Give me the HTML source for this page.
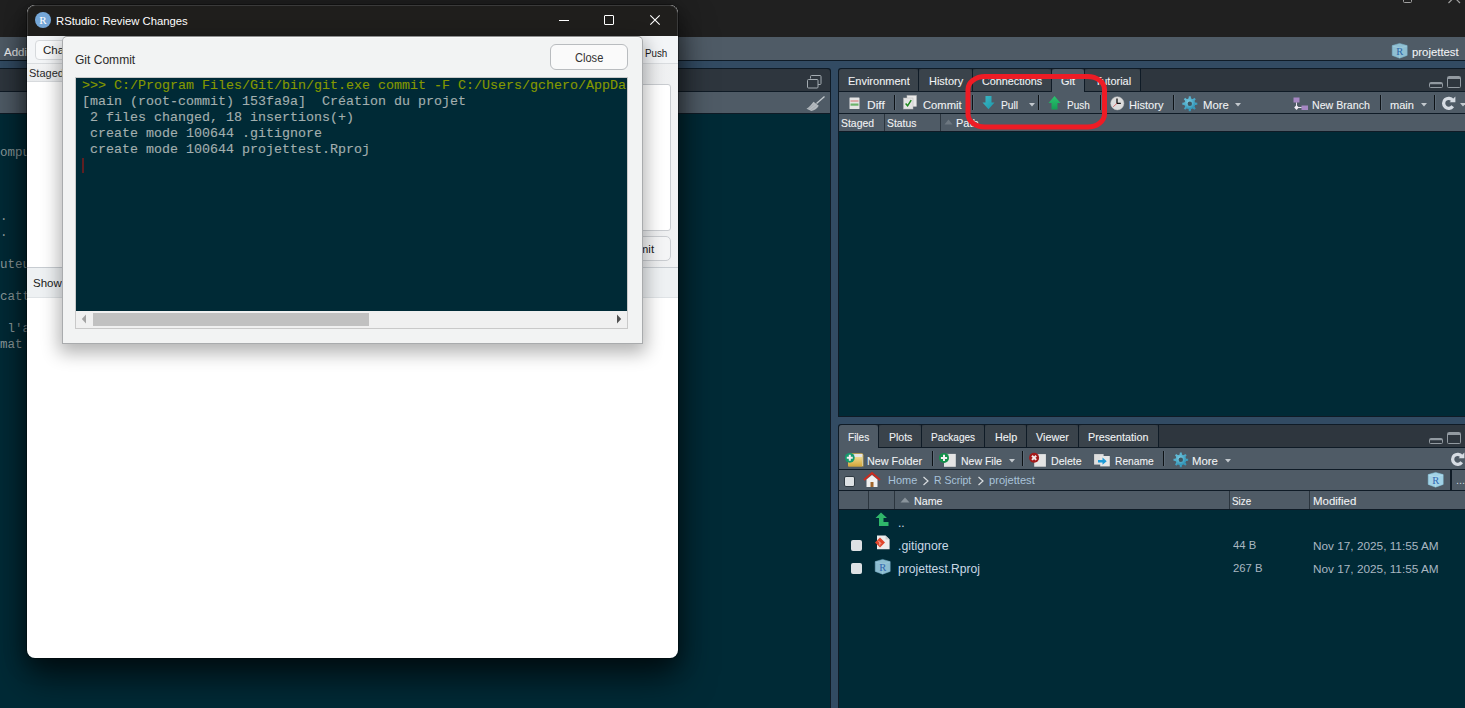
<!DOCTYPE html>
<html><head><meta charset="utf-8">
<style>
*{box-sizing:border-box;margin:0;padding:0}
html,body{width:1465px;height:708px;overflow:hidden;background:#324b63;font-family:"Liberation Sans",sans-serif;position:relative}
.a{position:absolute}
.t{position:absolute;white-space:pre;line-height:1}
svg{overflow:visible}
</style></head><body>
<div class="a" style="left:0px;top:0px;width:1465px;height:37px;background:#202020;"></div>
<svg class="a" style="left:1403px;top:-1px;" width="12" height="4" viewBox="0 0 12 4"><path d="M0.5 -5 L0.5 2.5 Q0.5 3.5 1.5 3.5 L7.5 3.5 Q8.5 3.5 8.5 2.5 L8.5 -5" fill="none" stroke="#a0a0a0" stroke-width="1"/><path d="M10 -4 L10 0" stroke="#a0a0a0" stroke-width="1"/></svg>
<svg class="a" style="left:1447px;top:0px;" width="14" height="4" viewBox="0 0 14 4"><path d="M1.5 3 L6 -1.5 M13 3 L8.5 -1.5" stroke="#a0a0a0" stroke-width="1.2"/></svg>
<div class="a" style="left:0px;top:37px;width:1465px;height:24px;background:#4f5b66;border-bottom:1px solid #0f1c28"></div>
<div class="t" style="left:4.00px;top:47.27px;font-size:11.5px;color:#eef0f2;font-family:'Liberation Sans';-webkit-text-stroke:0.2px rgba(255,255,255,0.55);">Addins</div>
<svg class="a" style="left:1392px;top:43px;" width="16" height="16" viewBox="0 0 16 16"><path d="M7.6 0.4 L15.2 2.6 L15.2 12.4 L7.6 15.2 L0.2 12.4 L0.2 2.6 Z" fill="#8fbfd2" stroke="#78b0c8" stroke-width="0.5"/><path d="M0.6 3 L7.6 5 L15 3 M7.6 5 L7.6 15" stroke="#a9d3e4" stroke-width="0.5" fill="none"/><text x="7.8" y="11.6" font-size="10.5" text-anchor="middle" fill="#2f66a8" font-family="Liberation Serif">R</text></svg>
<div class="t" style="left:1412.00px;top:47.43px;font-size:11.3px;color:#eef0f2;font-family:'Liberation Sans';transform:scaleX(1.0043);transform-origin:0 0;-webkit-text-stroke:0.2px rgba(255,255,255,0.55);">projettest</div>
<div class="a" style="left:0px;top:68px;width:831px;height:640px;background:#0f1b26;border-radius:0 3px 0 0"></div>
<div class="a" style="left:0px;top:69px;width:830px;height:22px;background:#2e363e;border-radius:0 3px 0 0"></div>
<div class="a" style="left:0px;top:92px;width:830px;height:21px;background:#4f5b66;"></div>
<div class="a" style="left:0px;top:114px;width:830px;height:594px;background:#002a36;"></div>
<svg class="a" style="left:806px;top:74px;" width="16" height="15" viewBox="0 0 16 15"><path d="M4.5 4.5 L4.5 2.5 Q4.5 1.5 5.5 1.5 L14 1.5 Q15 1.5 15 2.5 L15 9.5 Q15 10.5 14 10.5 L12 10.5" fill="none" stroke="#a3abb1" stroke-width="1"/><rect x="1.5" y="5.5" width="10.5" height="8.5" fill="none" stroke="#a3abb1" stroke-width="1" rx="1"/></svg>
<svg class="a" style="left:805px;top:95px;" width="22" height="18" viewBox="0 0 22 18"><path d="M19.5 1.5 L11.5 8.5" stroke="#c3c9ce" stroke-width="1.3"/><path d="M8.5 6.8 L13.8 10.8 C12 13.5 9.5 15.5 6.5 16 L1.5 13.8 C4 12.5 6.5 9.5 8.5 6.8 Z" fill="#b4babf"/><path d="M3 14.3 L9.5 9 M5.5 15.2 L11.5 10.5" stroke="#9aa1a7" stroke-width="0.6"/></svg>
<div class="t" style="left:0px;top:147.42px;font-size:12.5px;color:#8d9a9c;font-family:'Liberation Mono';">ompu</div>
<div class="t" style="left:0px;top:211.42px;font-size:12.5px;color:#8d9a9c;font-family:'Liberation Mono';">.</div>
<div class="t" style="left:0px;top:227.42px;font-size:12.5px;color:#8d9a9c;font-family:'Liberation Mono';">.</div>
<div class="t" style="left:0px;top:259.42px;font-size:12.5px;color:#8d9a9c;font-family:'Liberation Mono';">uteu</div>
<div class="t" style="left:0px;top:291.42px;font-size:12.5px;color:#8d9a9c;font-family:'Liberation Mono';">catt</div>
<div class="t" style="left:0px;top:323.42px;font-size:12.5px;color:#8d9a9c;font-family:'Liberation Mono';"> l'a</div>
<div class="t" style="left:0px;top:339.42px;font-size:12.5px;color:#8d9a9c;font-family:'Liberation Mono';">mat</div>
<div class="a" style="left:838px;top:68px;width:627px;height:349px;background:#0f1b26;border-radius:3px 0 0 0"></div>
<div class="a" style="left:839px;top:69px;width:626px;height:22px;background:#2e363e;border-radius:3px 0 0 0"></div>
<div class="a" style="left:839px;top:69px;width:79px;height:22px;background:#3a434b;border-radius:3px 3px 0 0"></div>
<div class="a" style="left:918px;top:69px;width:1px;height:22px;background:#0f1b26;"></div>
<div class="t" style="left:848.30px;top:75.69px;font-size:11px;color:#eef0f2;font-family:'Liberation Sans';transform:scaleX(0.9989);transform-origin:0 0;-webkit-text-stroke:0.2px rgba(255,255,255,0.55);">Environment</div>
<div class="a" style="left:919px;top:69px;width:53px;height:22px;background:#3a434b;border-radius:3px 3px 0 0"></div>
<div class="a" style="left:972px;top:69px;width:1px;height:22px;background:#0f1b26;"></div>
<div class="t" style="left:928.70px;top:75.69px;font-size:11px;color:#eef0f2;font-family:'Liberation Sans';transform:scaleX(0.9968);transform-origin:0 0;-webkit-text-stroke:0.2px rgba(255,255,255,0.55);">History</div>
<div class="a" style="left:973px;top:69px;width:78px;height:22px;background:#3a434b;border-radius:3px 3px 0 0"></div>
<div class="a" style="left:1051px;top:69px;width:1px;height:22px;background:#0f1b26;"></div>
<div class="t" style="left:982.20px;top:75.69px;font-size:11px;color:#eef0f2;font-family:'Liberation Sans';transform:scaleX(0.9827);transform-origin:0 0;-webkit-text-stroke:0.2px rgba(255,255,255,0.55);">Connections</div>
<div class="a" style="left:1052px;top:69px;width:32px;height:23px;background:#4f5b66;border-radius:3px 3px 0 0"></div>
<div class="a" style="left:1084px;top:69px;width:1px;height:22px;background:#0f1b26;"></div>
<div class="t" style="left:1061.00px;top:75.69px;font-size:11px;color:#eef0f2;font-family:'Liberation Sans';transform:scaleX(0.9943);transform-origin:0 0;-webkit-text-stroke:0.2px rgba(255,255,255,0.55);">Git</div>
<div class="a" style="left:1085px;top:69px;width:55px;height:22px;background:#3a434b;border-radius:3px 3px 0 0"></div>
<div class="a" style="left:1140px;top:69px;width:1px;height:22px;background:#0f1b26;"></div>
<div class="t" style="left:1094.60px;top:75.69px;font-size:11px;color:#eef0f2;font-family:'Liberation Sans';transform:scaleX(0.9945);transform-origin:0 0;-webkit-text-stroke:0.2px rgba(255,255,255,0.55);">Tutorial</div>
<svg class="a" style="left:1428px;top:75px;" width="36" height="15" viewBox="0 0 36 15"><rect x="1.5" y="7.5" width="13" height="5" fill="none" stroke="#929aa1" stroke-width="1" rx="1"/><line x1="2" y1="8.5" x2="14" y2="8.5" stroke="#929aa1" stroke-width="1.5"/><rect x="19.5" y="1.5" width="13" height="11" fill="none" stroke="#929aa1" stroke-width="1" rx="1"/><line x1="20" y1="3" x2="32" y2="3" stroke="#929aa1" stroke-width="2"/></svg>
<div class="a" style="left:839px;top:92px;width:626px;height:21px;background:#4f5b66;"></div>
<svg class="a" style="left:849px;top:97px;" width="11" height="12" viewBox="0 0 11 12"><rect x="0.5" y="0.5" width="10" height="11.5" fill="#e4e4e4" rx="0.5"/><rect x="1.5" y="3" width="8" height="2" fill="#dcaaaa"/><rect x="1.5" y="6.5" width="8" height="2.2" fill="#6cb36c"/></svg>
<div class="t" style="left:867.10px;top:100.22px;font-size:11.2px;color:#eef0f2;font-family:'Liberation Sans';transform:scaleX(1.0702);transform-origin:0 0;-webkit-text-stroke:0.2px rgba(255,255,255,0.55);">Diff</div>
<div class="a" style="left:894px;top:95px;width:1px;height:15px;background:#0d1216;box-shadow:1px 0 0 rgba(120,135,148,0.35)"></div>
<svg class="a" style="left:903px;top:95px;" width="15" height="15" viewBox="0 0 15 15"><rect x="4" y="0.5" width="9.5" height="11" fill="#e9e9e9" stroke="#b9b9b9" stroke-width="0.5"/><rect x="0.5" y="3" width="9.5" height="11" fill="#e4e4e4" stroke="#b9b9b9" stroke-width="0.5"/><path d="M2.6 8.5 L4.6 10.8 L8.2 5.2" fill="none" stroke="#1e8a1e" stroke-width="1.5"/></svg>
<div class="t" style="left:923.30px;top:100.22px;font-size:11.2px;color:#eef0f2;font-family:'Liberation Sans';transform:scaleX(1.0030);transform-origin:0 0;-webkit-text-stroke:0.2px rgba(255,255,255,0.55);">Commit</div>
<div class="a" style="left:972px;top:95px;width:1px;height:15px;background:#0d1216;box-shadow:1px 0 0 rgba(120,135,148,0.35)"></div>
<svg class="a" style="left:982px;top:96px;" width="13" height="14" viewBox="0 0 13 14"><defs><linearGradient id="gp" x1="0" y1="0" x2="1" y2="1"><stop offset="0" stop-color="#3bbac6"/><stop offset="1" stop-color="#1c97aa"/></linearGradient></defs><path d="M3.5 0 L9.5 0 L9.5 6.5 L12.5 6.5 L6.5 13.2 L0.5 6.5 L3.5 6.5 Z" fill="url(#gp)"/></svg>
<div class="t" style="left:1001.00px;top:100.22px;font-size:11.2px;color:#eef0f2;font-family:'Liberation Sans';transform:scaleX(0.9196);transform-origin:0 0;-webkit-text-stroke:0.2px rgba(255,255,255,0.55);">Pull</div>
<svg class="a" style="left:1028.5px;top:103px;" width="6" height="4" viewBox="0 0 6 4"><path d="M0 0 L6 0 L3 3.5 Z" fill="#c3c9ce"/></svg>
<div class="a" style="left:1038px;top:95px;width:1px;height:15px;background:#0d1216;box-shadow:1px 0 0 rgba(120,135,148,0.35)"></div>
<svg class="a" style="left:1048px;top:96px;" width="13" height="14" viewBox="0 0 13 14"><defs><linearGradient id="gu" x1="0" y1="0" x2="0" y2="1"><stop offset="0" stop-color="#2bc46f"/><stop offset="1" stop-color="#159c55"/></linearGradient></defs><path d="M6.5 0 L12.5 7 L9.5 7 L9.5 13.5 L3.5 13.5 L3.5 7 L0.5 7 Z" fill="url(#gu)"/></svg>
<div class="t" style="left:1067.00px;top:100.22px;font-size:11.2px;color:#eef0f2;font-family:'Liberation Sans';transform:scaleX(0.8929);transform-origin:0 0;-webkit-text-stroke:0.2px rgba(255,255,255,0.55);">Push</div>
<div class="a" style="left:1100px;top:95px;width:1px;height:15px;background:#0d1216;box-shadow:1px 0 0 rgba(120,135,148,0.35)"></div>
<svg class="a" style="left:1110px;top:96px;" width="15" height="15" viewBox="0 0 15 15"><circle cx="7.3" cy="7.3" r="6.6" fill="#dcdcdc" stroke="#c4c4c4" stroke-width="0.5"/><path d="M7 2.5 L7 7.3 L10.8 7.3" fill="none" stroke="#111" stroke-width="1.3"/><path d="M7 7.3 L3.2 10.8" stroke="#d86060" stroke-width="0.9"/></svg>
<div class="t" style="left:1129.20px;top:100.22px;font-size:11.2px;color:#eef0f2;font-family:'Liberation Sans';transform:scaleX(0.9905);transform-origin:0 0;-webkit-text-stroke:0.2px rgba(255,255,255,0.55);">History</div>
<div class="a" style="left:1173px;top:95px;width:1px;height:15px;background:#0d1216;box-shadow:1px 0 0 rgba(120,135,148,0.35)"></div>
<svg class="a" style="left:1182px;top:96px;" width="16" height="16" viewBox="0 0 16 16"><defs><radialGradient id="gg" cx="0.4" cy="0.35" r="0.7"><stop offset="0" stop-color="#7fd0e6"/><stop offset="1" stop-color="#2a8fb3"/></radialGradient></defs><path d="M13.07 6.62 L15.34 6.81 L15.34 8.79 L13.07 8.98 L12.36 10.69 L13.83 12.43 L12.43 13.83 L10.69 12.36 L8.98 13.07 L8.79 15.34 L6.81 15.34 L6.62 13.07 L4.91 12.36 L3.17 13.83 L1.77 12.43 L3.24 10.69 L2.53 8.98 L0.26 8.79 L0.26 6.81 L2.53 6.62 L3.24 4.91 L1.77 3.17 L3.17 1.77 L4.91 3.24 L6.62 2.53 L6.81 0.26 L8.79 0.26 L8.98 2.53 L10.69 3.24 L12.43 1.77 L13.83 3.17 L12.36 4.91 Z" fill="url(#gg)"/><circle cx="7.8" cy="7.8" r="5.3" fill="url(#gg)"/><circle cx="7.8" cy="7.8" r="2.2" fill="#3f5560"/></svg>
<div class="t" style="left:1202.60px;top:100.22px;font-size:11.2px;color:#eef0f2;font-family:'Liberation Sans';transform:scaleX(1.0103);transform-origin:0 0;-webkit-text-stroke:0.2px rgba(255,255,255,0.55);">More</div>
<svg class="a" style="left:1234.5px;top:103px;" width="6" height="4" viewBox="0 0 6 4"><path d="M0 0 L6 0 L3 3.5 Z" fill="#c3c9ce"/></svg>
<svg class="a" style="left:1293px;top:97px;" width="16" height="14" viewBox="0 0 16 14"><rect x="0.5" y="0.5" width="6" height="5" fill="#a586c2"/><rect x="8.5" y="8.5" width="6.5" height="4.5" fill="#a586c2"/><path d="M3.5 5.5 L3.5 10.5 L8.5 10.5" stroke="#e9e0f0" stroke-width="1" fill="none"/><path d="M3.5 8 L5.8 10.5 L3.5 13 L1.2 10.5 Z" fill="#f2eef5"/></svg>
<div class="t" style="left:1312.20px;top:100.39px;font-size:11px;color:#eef0f2;font-family:'Liberation Sans';transform:scaleX(0.9667);transform-origin:0 0;-webkit-text-stroke:0.2px rgba(255,255,255,0.55);">New Branch</div>
<div class="a" style="left:1380px;top:95px;width:1px;height:15px;background:#0d1216;box-shadow:1px 0 0 rgba(120,135,148,0.35)"></div>
<div class="t" style="left:1390.00px;top:100.22px;font-size:11.2px;color:#eef0f2;font-family:'Liberation Sans';transform:scaleX(0.9875);transform-origin:0 0;-webkit-text-stroke:0.2px rgba(255,255,255,0.55);">main</div>
<svg class="a" style="left:1420.5px;top:103px;" width="6" height="4" viewBox="0 0 6 4"><path d="M0 0 L6 0 L3 3.5 Z" fill="#c3c9ce"/></svg>
<div class="a" style="left:1434px;top:95px;width:1px;height:15px;background:#0d1216;box-shadow:1px 0 0 rgba(120,135,148,0.35)"></div>
<svg class="a" style="left:1441px;top:96px;" width="16" height="15" viewBox="0 0 16 15"><path d="M11.7 4.4 A5 5 0 1 0 11.7 10.2" fill="none" stroke="#d6dce3" stroke-width="3.3"/><path d="M8.6 6.2 L14.4 6.2 L14.4 0.6 Z" fill="#d6dce3"/></svg>
<svg class="a" style="left:1460px;top:103px;" width="6" height="4" viewBox="0 0 6 4"><path d="M0 0 L6 0 L3 3.5 Z" fill="#c3c9ce"/></svg>
<div class="a" style="left:839px;top:114px;width:626px;height:17px;background:#4f5b66;"></div>
<div class="a" style="left:884px;top:114px;width:1px;height:17px;background:#2b353e;"></div>
<div class="a" style="left:940px;top:114px;width:1px;height:17px;background:#2b353e;"></div>
<div class="t" style="left:841.00px;top:118.19px;font-size:11px;color:#eef0f2;font-family:'Liberation Sans';transform:scaleX(0.9464);transform-origin:0 0;-webkit-text-stroke:0.2px rgba(255,255,255,0.55);">Staged</div>
<div class="t" style="left:887.00px;top:118.19px;font-size:11px;color:#eef0f2;font-family:'Liberation Sans';transform:scaleX(0.9428);transform-origin:0 0;-webkit-text-stroke:0.2px rgba(255,255,255,0.55);">Status</div>
<svg class="a" style="left:944px;top:119px;" width="9" height="6" viewBox="0 0 9 6"><path d="M0.5 5.5 L4.5 0.5 L8.5 5.5 Z" fill="#6d7780"/></svg>
<div class="t" style="left:956.00px;top:118.19px;font-size:11px;color:#eef0f2;font-family:'Liberation Sans';-webkit-text-stroke:0.2px rgba(255,255,255,0.55);">Path</div>
<div class="a" style="left:839px;top:132px;width:626px;height:284px;background:#002a36;"></div>
<div class="a" style="left:838px;top:424px;width:627px;height:284px;background:#0f1b26;border-radius:3px 0 0 0"></div>
<div class="a" style="left:839px;top:425px;width:626px;height:22px;background:#2e363e;border-radius:3px 0 0 0"></div>
<div class="a" style="left:839px;top:425px;width:39px;height:23px;background:#4f5b66;border-radius:3px 3px 0 0"></div>
<div class="a" style="left:878px;top:425px;width:1px;height:22px;background:#0f1b26;"></div>
<div class="t" style="left:848.00px;top:431.69px;font-size:11px;color:#eef0f2;font-family:'Liberation Sans';transform:scaleX(0.9134);transform-origin:0 0;-webkit-text-stroke:0.2px rgba(255,255,255,0.55);">Files</div>
<div class="a" style="left:879px;top:425px;width:42px;height:22px;background:#3a434b;border-radius:3px 3px 0 0"></div>
<div class="a" style="left:921px;top:425px;width:1px;height:22px;background:#0f1b26;"></div>
<div class="t" style="left:888.50px;top:431.69px;font-size:11px;color:#eef0f2;font-family:'Liberation Sans';transform:scaleX(0.9561);transform-origin:0 0;-webkit-text-stroke:0.2px rgba(255,255,255,0.55);">Plots</div>
<div class="a" style="left:922px;top:425px;width:62px;height:22px;background:#3a434b;border-radius:3px 3px 0 0"></div>
<div class="a" style="left:984px;top:425px;width:1px;height:22px;background:#0f1b26;"></div>
<div class="t" style="left:931.10px;top:431.69px;font-size:11px;color:#eef0f2;font-family:'Liberation Sans';transform:scaleX(0.9132);transform-origin:0 0;-webkit-text-stroke:0.2px rgba(255,255,255,0.55);">Packages</div>
<div class="a" style="left:985px;top:425px;width:41px;height:22px;background:#3a434b;border-radius:3px 3px 0 0"></div>
<div class="a" style="left:1026px;top:425px;width:1px;height:22px;background:#0f1b26;"></div>
<div class="t" style="left:994.70px;top:431.69px;font-size:11px;color:#eef0f2;font-family:'Liberation Sans';transform:scaleX(0.9821);transform-origin:0 0;-webkit-text-stroke:0.2px rgba(255,255,255,0.55);">Help</div>
<div class="a" style="left:1027px;top:425px;width:51px;height:22px;background:#3a434b;border-radius:3px 3px 0 0"></div>
<div class="a" style="left:1078px;top:425px;width:1px;height:22px;background:#0f1b26;"></div>
<div class="t" style="left:1035.90px;top:431.69px;font-size:11px;color:#eef0f2;font-family:'Liberation Sans';transform:scaleX(0.9809);transform-origin:0 0;-webkit-text-stroke:0.2px rgba(255,255,255,0.55);">Viewer</div>
<div class="a" style="left:1079px;top:425px;width:79px;height:22px;background:#3a434b;border-radius:3px 3px 0 0"></div>
<div class="a" style="left:1158px;top:425px;width:1px;height:22px;background:#0f1b26;"></div>
<div class="t" style="left:1087.90px;top:431.69px;font-size:11px;color:#eef0f2;font-family:'Liberation Sans';transform:scaleX(0.9779);transform-origin:0 0;-webkit-text-stroke:0.2px rgba(255,255,255,0.55);">Presentation</div>
<svg class="a" style="left:1428px;top:431px;" width="36" height="15" viewBox="0 0 36 15"><rect x="1.5" y="7.5" width="13" height="5" fill="none" stroke="#929aa1" stroke-width="1" rx="1"/><line x1="2" y1="8.5" x2="14" y2="8.5" stroke="#929aa1" stroke-width="1.5"/><rect x="19.5" y="1.5" width="13" height="11" fill="none" stroke="#929aa1" stroke-width="1" rx="1"/><line x1="20" y1="3" x2="32" y2="3" stroke="#929aa1" stroke-width="2"/></svg>
<div class="a" style="left:839px;top:448px;width:626px;height:21px;background:#4f5b66;"></div>
<svg class="a" style="left:840px;top:448px;" width="26" height="20" viewBox="0 0 26 20"><defs><linearGradient id="fg" x1="0" y1="0" x2="0" y2="1"><stop offset="0" stop-color="#efd98a"/><stop offset="1" stop-color="#d2a53a"/></linearGradient></defs><path d="M8.5 7 Q8.5 5.3 10.5 5.3 L21.5 5.3 Q23.4 5.3 23.4 7.3 L23.4 18.4 L8.5 18.4 Z" fill="#cfae4a"/><rect x="11" y="6" width="11.5" height="12" fill="#e4e4e4"/><rect x="8" y="9" width="14" height="9.4" fill="url(#fg)"/><circle cx="9.8" cy="9.8" r="4.9" fill="#159a6c"/><path d="M9.8 6.8 V12.8 M6.8 9.8 H12.8" stroke="#f4ecef" stroke-width="2"/></svg>
<div class="t" style="left:867.30px;top:455.52px;font-size:11.2px;color:#eef0f2;font-family:'Liberation Sans';transform:scaleX(0.9653);transform-origin:0 0;-webkit-text-stroke:0.2px rgba(255,255,255,0.55);">New Folder</div>
<div class="a" style="left:932px;top:451px;width:1px;height:15px;background:#0d1216;box-shadow:1px 0 0 rgba(120,135,148,0.35)"></div>
<svg class="a" style="left:935px;top:448px;" width="24" height="20" viewBox="0 0 24 20"><rect x="9" y="5.9" width="11.8" height="12.9" fill="#e4e4e4"/><circle cx="9" cy="9.9" r="5" fill="#14904a"/><path d="M9 6.8 V13 M5.9 9.9 H12.1" stroke="#f6eef2" stroke-width="2"/></svg>
<div class="t" style="left:960.90px;top:455.52px;font-size:11.2px;color:#eef0f2;font-family:'Liberation Sans';transform:scaleX(0.9388);transform-origin:0 0;-webkit-text-stroke:0.2px rgba(255,255,255,0.55);">New File</div>
<svg class="a" style="left:1008.5px;top:459px;" width="6" height="4" viewBox="0 0 6 4"><path d="M0 0 L6 0 L3 3.5 Z" fill="#c3c9ce"/></svg>
<div class="a" style="left:1022px;top:451px;width:1px;height:15px;background:#0d1216;box-shadow:1px 0 0 rgba(120,135,148,0.35)"></div>
<svg class="a" style="left:1025px;top:448px;" width="24" height="20" viewBox="0 0 24 20"><rect x="9.2" y="6.1" width="11.7" height="12.6" fill="#e4e4e4"/><circle cx="9.1" cy="9.8" r="5" fill="#a3191a"/><path d="M7 7.7 L11.2 11.9 M11.2 7.7 L7 11.9" stroke="#f2eaea" stroke-width="2"/></svg>
<div class="t" style="left:1051.30px;top:455.52px;font-size:11.2px;color:#eef0f2;font-family:'Liberation Sans';transform:scaleX(0.9485);transform-origin:0 0;-webkit-text-stroke:0.2px rgba(255,255,255,0.55);">Delete</div>
<svg class="a" style="left:1090px;top:448px;" width="24" height="20" viewBox="0 0 24 20"><rect x="4.1" y="6.1" width="9.5" height="10.5" fill="#dedede"/><rect x="10.2" y="8" width="9.6" height="10.4" fill="#e6e6e6"/><path d="M8 12 L12.5 12 L12.5 9.6 L16.7 13.2 L12.5 16.8 L12.5 14.4 L8 14.4 Z" fill="#1e9ad6"/></svg>
<div class="t" style="left:1114.50px;top:455.52px;font-size:11.2px;color:#eef0f2;font-family:'Liberation Sans';transform:scaleX(0.9141);transform-origin:0 0;-webkit-text-stroke:0.2px rgba(255,255,255,0.55);">Rename</div>
<div class="a" style="left:1163px;top:451px;width:1px;height:15px;background:#0d1216;box-shadow:1px 0 0 rgba(120,135,148,0.35)"></div>
<svg class="a" style="left:1173px;top:452px;" width="16" height="16" viewBox="0 0 16 16"><defs><radialGradient id="gg2" cx="0.4" cy="0.35" r="0.7"><stop offset="0" stop-color="#7fd0e6"/><stop offset="1" stop-color="#2a8fb3"/></radialGradient></defs><path d="M12.97 6.64 L15.14 6.84 L15.14 8.76 L12.97 8.96 L12.28 10.64 L13.67 12.31 L12.31 13.67 L10.64 12.28 L8.96 12.97 L8.76 15.14 L6.84 15.14 L6.64 12.97 L4.96 12.28 L3.29 13.67 L1.93 12.31 L3.32 10.64 L2.63 8.96 L0.46 8.76 L0.46 6.84 L2.63 6.64 L3.32 4.96 L1.93 3.29 L3.29 1.93 L4.96 3.32 L6.64 2.63 L6.84 0.46 L8.76 0.46 L8.96 2.63 L10.64 3.32 L12.31 1.93 L13.67 3.29 L12.28 4.96 Z" fill="url(#gg2)"/><circle cx="7.8" cy="7.8" r="5.2" fill="url(#gg2)"/><circle cx="7.8" cy="7.8" r="2.2" fill="#3f5560"/></svg>
<div class="t" style="left:1192.30px;top:455.52px;font-size:11.2px;color:#eef0f2;font-family:'Liberation Sans';transform:scaleX(1.0182);transform-origin:0 0;-webkit-text-stroke:0.2px rgba(255,255,255,0.55);">More</div>
<svg class="a" style="left:1225px;top:459px;" width="6" height="4" viewBox="0 0 6 4"><path d="M0 0 L6 0 L3 3.5 Z" fill="#c3c9ce"/></svg>
<svg class="a" style="left:1450px;top:452px;" width="16" height="15" viewBox="0 0 16 15"><path d="M11.7 4.4 A5 5 0 1 0 11.7 10.2" fill="none" stroke="#d6dce3" stroke-width="3.3"/><path d="M8.6 6.2 L14.4 6.2 L14.4 0.6 Z" fill="#d6dce3"/></svg>
<div class="a" style="left:839px;top:470px;width:626px;height:20px;background:#4f5b66;"></div>
<div class="a" style="left:844px;top:476px;width:11px;height:11px;background:#dde1e4;border-radius:2px;border:1px solid #2e3942"></div>
<svg class="a" style="left:863px;top:472px;" width="18" height="16" viewBox="0 0 18 16"><path d="M1 8 L9 1 L17 8" fill="none" stroke="#cc2a1e" stroke-width="2"/><path d="M3.5 7.5 L9 3 L14.5 7.5 L14.5 15 L3.5 15 Z" fill="#f0f0f0"/><rect x="7.5" y="10" width="3" height="5" fill="#a0652a"/></svg>
<div class="t" style="left:888.20px;top:474.77px;font-size:11.5px;color:#a9c3da;font-family:'Liberation Sans';transform:scaleX(0.9542);transform-origin:0 0;">Home</div>
<svg class="a" style="left:922px;top:476px;" width="8" height="10" viewBox="0 0 8 10"><path d="M1.5 1 L6 5 L1.5 9" fill="none" stroke="#d9dde0" stroke-width="1.2"/></svg>
<div class="t" style="left:934.40px;top:474.77px;font-size:11.5px;color:#a9c3da;font-family:'Liberation Sans';transform:scaleX(0.9099);transform-origin:0 0;">R Script</div>
<svg class="a" style="left:976.5px;top:476px;" width="8" height="10" viewBox="0 0 8 10"><path d="M1.5 1 L6 5 L1.5 9" fill="none" stroke="#d9dde0" stroke-width="1.2"/></svg>
<div class="t" style="left:989.20px;top:474.77px;font-size:11.5px;color:#a9c3da;font-family:'Liberation Sans';transform:scaleX(0.9678);transform-origin:0 0;">projettest</div>
<svg class="a" style="left:1428px;top:472px;" width="16" height="16" viewBox="0 0 16 16"><path d="M7.6 0.4 L15.2 2.6 L15.2 12.4 L7.6 15.2 L0.2 12.4 L0.2 2.6 Z" fill="#a2d2e6" stroke="#86c6de" stroke-width="0.5"/><path d="M0.6 3 L7.6 5 L15 3 M7.6 5 L7.6 15" stroke="#bfe2ef" stroke-width="0.5" fill="none"/><text x="7.8" y="11.6" font-size="10.5" text-anchor="middle" fill="#3469b4" font-family="Liberation Serif">R</text></svg>
<div class="a" style="left:1450px;top:470px;width:2px;height:20px;background:#0f1b26;"></div>
<div class="t" style="left:1456.00px;top:474.69px;font-size:11px;color:#c8d4de;font-family:'Liberation Sans';">...</div>
<div class="a" style="left:839px;top:491px;width:626px;height:18px;background:#4f5b66;"></div>
<div class="a" style="left:868px;top:491px;width:1px;height:18px;background:#2b353e;"></div>
<div class="a" style="left:894px;top:491px;width:1px;height:18px;background:#2b353e;"></div>
<div class="a" style="left:1229px;top:491px;width:1px;height:18px;background:#2b353e;"></div>
<div class="a" style="left:1309px;top:491px;width:1px;height:18px;background:#2b353e;"></div>
<svg class="a" style="left:900px;top:497px;" width="10" height="6" viewBox="0 0 10 6"><path d="M0.5 5.5 L5 0.5 L9.5 5.5 Z" fill="#8a949c"/></svg>
<div class="t" style="left:914.40px;top:496.02px;font-size:11.2px;color:#eef0f2;font-family:'Liberation Sans';transform:scaleX(0.9564);transform-origin:0 0;-webkit-text-stroke:0.2px rgba(255,255,255,0.55);">Name</div>
<div class="t" style="left:1231.90px;top:496.02px;font-size:11.2px;color:#eef0f2;font-family:'Liberation Sans';transform:scaleX(0.8768);transform-origin:0 0;-webkit-text-stroke:0.2px rgba(255,255,255,0.55);">Size</div>
<div class="t" style="left:1312.50px;top:496.02px;font-size:11.2px;color:#eef0f2;font-family:'Liberation Sans';transform:scaleX(1.0228);transform-origin:0 0;-webkit-text-stroke:0.2px rgba(255,255,255,0.55);">Modified</div>
<div class="a" style="left:839px;top:510px;width:626px;height:198px;background:#002a36;"></div>
<svg class="a" style="left:875px;top:512px;" width="14" height="15" viewBox="0 0 14 15"><path d="M6 0.5 L12 6 L8.5 6 L8.5 10 L13.5 10 L13.5 14 L4 14 L4 6 L0.5 6 Z" fill="#2fb66a"/></svg>
<div class="t" style="left:898.00px;top:516.84px;font-size:12px;color:#c8d8e8;font-family:'Liberation Sans';">..</div>
<div class="a" style="left:851px;top:540px;width:11px;height:11px;background:#dde1e4;border-radius:2px"></div>
<svg class="a" style="left:875px;top:535px;" width="16" height="15" viewBox="0 0 16 15"><path d="M2 0.5 L10.5 0.5 L14.6 4.6 L14.6 14.3 L2 14.3 Z" fill="#ececec"/><path d="M10.5 0.5 L10.5 4.6 L14.6 4.6 Z" fill="#cdcdcd"/><path d="M5 2.6 L10 7.6 L5 12.6 L0 7.6 Z" fill="#e0452c"/><path d="M3.2 5.8 L6.2 8.8 M4.8 7.4 L4.8 10.5" stroke="#f3c9c0" stroke-width="0.8"/></svg>
<div class="t" style="left:898.00px;top:539.84px;font-size:12px;color:#c9d8e6;font-family:'Liberation Sans';transform:scaleX(1.0267);transform-origin:0 0;">.gitignore</div>
<div class="t" style="left:1232.70px;top:540.27px;font-size:11.5px;color:#a9b7c2;font-family:'Liberation Sans';transform:scaleX(0.9775);transform-origin:0 0;">44 B</div>
<div class="t" style="left:1312.90px;top:540.18px;font-size:11.6px;color:#a9b7c2;font-family:'Liberation Sans';transform:scaleX(1.0170);transform-origin:0 0;">Nov 17, 2025, 11:55 AM</div>
<div class="a" style="left:851px;top:563px;width:11px;height:11px;background:#dde1e4;border-radius:2px"></div>
<svg class="a" style="left:875px;top:559px;" width="16" height="16" viewBox="0 0 16 16"><path d="M7.6 0.4 L15.2 2.6 L15.2 12.4 L7.6 15.2 L0.2 12.4 L0.2 2.6 Z" fill="#8cbcd0" stroke="#74aac2" stroke-width="0.5"/><path d="M0.6 3 L7.6 5 L15 3 M7.6 5 L7.6 15" stroke="#a5cfe0" stroke-width="0.5" fill="none"/><text x="7.8" y="11.6" font-size="10.5" text-anchor="middle" fill="#3366b0" font-family="Liberation Serif">R</text></svg>
<div class="t" style="left:898.00px;top:562.84px;font-size:12px;color:#c9d8e6;font-family:'Liberation Sans';transform:scaleX(1.0079);transform-origin:0 0;">projettest.Rproj</div>
<div class="t" style="left:1232.70px;top:563.27px;font-size:11.5px;color:#a9b7c2;font-family:'Liberation Sans';transform:scaleX(0.9843);transform-origin:0 0;">267 B</div>
<div class="t" style="left:1312.90px;top:563.18px;font-size:11.6px;color:#a9b7c2;font-family:'Liberation Sans';transform:scaleX(1.0170);transform-origin:0 0;">Nov 17, 2025, 11:55 AM</div>
<div class="a" style="left:27px;top:5px;width:651px;height:653px;border-radius:8px;box-shadow:0 20px 36px 0 rgba(0,0,0,0.6), 0 4px 20px 2px rgba(0,0,0,0.35), 0 0 0 1px rgba(0,0,0,0.3)"></div>
<div class="a" style="left:27px;top:5px;width:651px;height:653px;border-radius:8px;overflow:hidden;background:#ffffff">
<div class="a" style="left:0px;top:0px;width:651px;height:31px;background:#1f1e1c;border:1px solid #3a3a3a;border-bottom:none;border-radius:8px 8px 0 0"></div>
<svg class="a" style="left:8px;top:7px" width="16" height="16" viewBox="0 0 16 16"><circle cx="8" cy="8" r="8" fill="#75a7d8"/><text x="8" y="12" font-size="11" text-anchor="middle" fill="#fff" font-family="Liberation Serif">R</text></svg>
<div class="t" style="left:29.20px;top:10.18px;font-size:11.6px;color:#ffffff;font-family:'Liberation Sans';transform:scaleX(0.9732);transform-origin:0 0;">RStudio: Review Changes</div>
<div class="a" style="left:532px;top:15px;width:10px;height:1px;background:#ffffff"></div>
<div class="a" style="left:577px;top:10px;width:10px;height:10px;border:1px solid #ffffff;border-radius:1px"></div>
<svg class="a" style="left:623px;top:10px" width="10" height="10"><path d="M0.3 0.3 L9.7 9.7 M9.7 0.3 L0.3 9.7" stroke="#fff" stroke-width="1.1"/></svg>
<div class="a" style="left:0px;top:31px;width:651px;height:27px;background:#f3f5f7;"></div>
<div class="a" style="left:0px;top:58px;width:651px;height:1px;background:#d9dcdf;"></div>
<div class="a" style="left:8px;top:35px;width:60px;height:20px;background:#f9fafb;border:1px solid #d6d9dc;border-radius:4px"></div>
<div class="t" style="left:16.00px;top:40.27px;font-size:11.5px;color:#1a1a1a;font-family:'Liberation Sans';">Changes</div>
<div class="t" style="left:618.20px;top:43.11px;font-size:10.5px;color:#1a1a1a;font-family:'Liberation Sans';transform:scaleX(0.9315);transform-origin:0 0;">Push</div>
<div class="a" style="left:0px;top:59px;width:651px;height:18px;background:linear-gradient(#f3f4f5,#e9ebed);border-bottom:1px solid #d7dadd"></div>
<div class="t" style="left:2.00px;top:62.69px;font-size:11px;color:#2a2a2a;font-family:'Liberation Sans';">Staged</div>
<div class="a" style="left:573px;top:59px;width:78px;height:203px;background:linear-gradient(90deg,#e4e6e8,#f1f2f3);"></div>
<div class="a" style="left:533px;top:79px;width:111px;height:147px;background:#fff;border:1px solid #c9ccd0;border-radius:3px"></div>
<div class="a" style="left:533px;top:231px;width:111px;height:25px;background:#f4f5f6;border:1px solid #c9ccd0;border-radius:5px"></div>
<div class="t" style="left:587.50px;top:239.27px;font-size:11.5px;color:#1a1a1a;font-family:'Liberation Sans';">Commit</div>
<div class="a" style="left:0px;top:262px;width:651px;height:1px;background:#c7ccd1;"></div>
<div class="a" style="left:0px;top:263px;width:651px;height:30px;background:#eef1f3;"></div>
<div class="a" style="left:0px;top:292px;width:651px;height:1px;background:#dfe3e6;"></div>
<div class="t" style="left:6.00px;top:273.27px;font-size:11.5px;color:#1a1a1a;font-family:'Liberation Sans';">Show</div>
</div>
<div class="a" style="left:62px;top:36px;width:581px;height:308px;border-radius:5px 5px 0 0;box-shadow:0 6px 18px 3px rgba(0,0,0,0.3)"></div>
<div class="a" style="left:62px;top:36px;width:581px;height:308px;background:#f2f3f3;border:1px solid #a9abad;border-top-color:#8e8f8f;border-radius:5px 5px 0 0;box-shadow:inset 0 1px 0 #f8f9f9"></div>
<div class="t" style="left:75.30px;top:53.84px;font-size:12px;color:#2a2a2a;font-family:'Liberation Sans';transform:scaleX(1.0033);transform-origin:0 0;">Git Commit</div>
<div class="a" style="left:550px;top:44px;width:78px;height:26px;background:#fafafa;border:1px solid #b9bcbf;border-radius:6px"></div>
<div class="t" style="left:574.80px;top:52.34px;font-size:12px;color:#333333;font-family:'Liberation Sans';transform:scaleX(0.9230);transform-origin:0 0;">Close</div>
<div class="a" style="left:75px;top:77px;width:553px;height:252px;background:#f0f0f0;border:1px solid #c9c9c9"></div>
<div class="a" style="left:76px;top:78px;width:551px;height:233px;background:#002a36;"></div>
<div class="a" style="left:76px;top:78px;width:551px;height:233px;overflow:hidden">
<div class="t" style="left:6px;top:0.78px;font-size:13.33px;color:#859900;font-family:'Liberation Mono';-webkit-text-stroke:0.12px #859900;">&gt;&gt;&gt; C:/Program Files/Git/bin/git.exe commit -F C:/Users/gchero/AppData</div>
<div class="t" style="left:6px;top:16.78px;font-size:13.33px;color:#a3afaf;font-family:'Liberation Mono';-webkit-text-stroke:0.12px #a3afaf;">[main (root-commit) 153fa9a]  Création du projet</div>
<div class="t" style="left:6px;top:32.78px;font-size:13.33px;color:#a3afaf;font-family:'Liberation Mono';-webkit-text-stroke:0.12px #a3afaf;"> 2 files changed, 18 insertions(+)</div>
<div class="t" style="left:6px;top:48.78px;font-size:13.33px;color:#a3afaf;font-family:'Liberation Mono';-webkit-text-stroke:0.12px #a3afaf;"> create mode 100644 .gitignore</div>
<div class="t" style="left:6px;top:64.78px;font-size:13.33px;color:#a3afaf;font-family:'Liberation Mono';-webkit-text-stroke:0.12px #a3afaf;"> create mode 100644 projettest.Rproj</div>
</div>
<div class="a" style="left:82px;top:158px;width:1.5px;height:15px;background:#5e1f22;"></div>
<div class="a" style="left:93px;top:313px;width:276px;height:13px;background:#c1c1c1;"></div>
<svg class="a" style="left:81px;top:314px;" width="6" height="10" viewBox="0 0 6 10"><path d="M5 0.5 L0.8 5 L5 9.5 Z" fill="#a3a3a3"/></svg>
<svg class="a" style="left:616px;top:314px;" width="6" height="10" viewBox="0 0 6 10"><path d="M1 0.5 L5.2 5 L1 9.5 Z" fill="#505050"/></svg>
<svg class="a" style="left:962px;top:71px" width="148" height="62" viewBox="0 0 148 62"><rect x="6" y="5.4" width="136.5" height="50.7" rx="17" ry="13" fill="none" stroke="#ee1c25" stroke-width="5"/></svg>
</body></html>
